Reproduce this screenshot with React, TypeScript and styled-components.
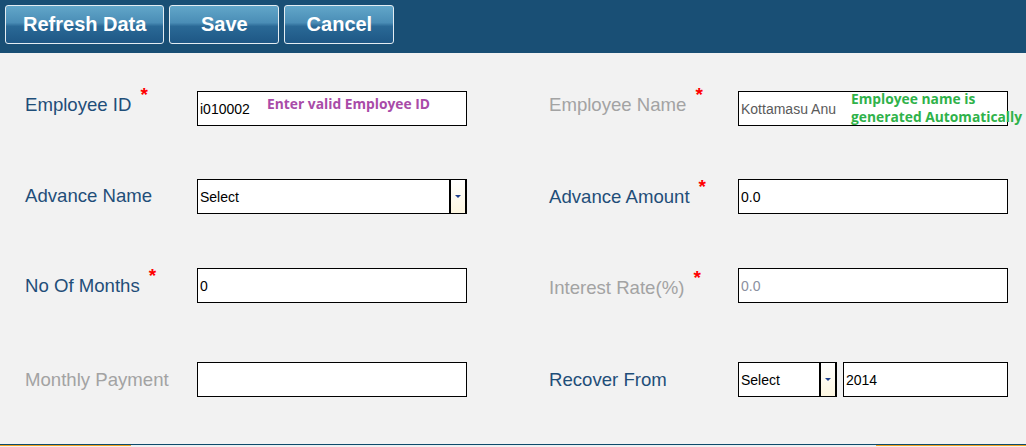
import styled, { createGlobalStyle } from 'styled-components'

const GlobalStyle = createGlobalStyle`
  html, body {
    margin: 0;
    padding: 0;
    background: #f2f2f2;
    font-family: "Liberation Sans", Arial, sans-serif;
  }
`

const Page = styled.div`
  width: 1026px;
  height: 447px;
  display: flex;
  flex-direction: column;
  overflow: hidden;
  background: #f2f2f2;
`

const Toolbar = styled.header`
  height: 53px;
  background: #194f75;
  display: flex;
  align-items: flex-start;
  gap: 5px;
  padding: 5px 0 0 5px;
  box-sizing: border-box;
`

const ToolButton = styled.button`
  height: 39px;
  min-width: 110px;
  padding: 0 17px;
  border: 1px solid #e3ecf2;
  border-radius: 3px;
  background: linear-gradient(180deg, #62a6c9 0%, #4a8db6 45%, #2a6996 55%, #1e5785 100%);
  color: #fff;
  font-family: "Liberation Sans", Arial, sans-serif;
  font-size: 20px;
  font-weight: bold;
  box-sizing: border-box;
  cursor: pointer;
`

const Form = styled.main`
  flex: 1;
  padding: 38px 0 0 25px;
  display: flex;
  flex-direction: column;
`

const Row = styled.div<{ $top: number }>`
  display: grid;
  grid-template-columns: 172px 270px 82px 189px 270px;
  height: 35px;
  margin-top: ${p => p.$top}px;
  align-items: center;
`

const Label = styled.label<{ $muted?: boolean; $dy?: number }>`
  font-size: 18.6px;
  color: ${p => (p.$muted ? '#a3a3a3' : '#1f4e79')};
  white-space: nowrap;
  position: relative;
  top: ${p => p.$dy || 0}px;
`

const Star = styled.span`
  color: #f00;
  font-size: 19px;
  font-weight: bold;
  margin-left: 9px;
  position: relative;
  top: -10px;
`

const Spacer = styled.div``

const Field = styled.div`
  position: relative;
  height: 35px;
  display: flex;
  gap: 6px;
`

const TextBox = styled.div<{ $color?: string }>`
  flex: 1;
  height: 35px;
  box-sizing: border-box;
  border: 1px solid #000;
  background: #fff;
  display: flex;
  align-items: center;
  padding-left: 2px;
  font-size: 14px;
  color: ${p => p.$color || '#000'};
  font-family: "Liberation Sans", Arial, sans-serif;
`

const SelectBox = styled.div<{ $width?: number }>`
  ${p => (p.$width ? `width: ${p.$width}px; flex: 0 0 auto;` : 'flex: 1;')}
  height: 35px;
  box-sizing: border-box;
  border: 1px solid #000;
  background: #fff;
  display: flex;
  align-items: center;
  font-size: 14px;
  color: #000;
`

const SelectText = styled.span`
  flex: 1;
  padding-left: 2px;
`

const Arrow = styled.span`
  width: 17px;
  height: 100%;
  box-sizing: border-box;
  border-left: 2px solid #000;
  border-right: 1px solid #000;
  background: linear-gradient(180deg, #ffffff 0%, #fdf6e0 100%);
  display: flex;
  align-items: center;
  justify-content: center;
  &::after {
    content: '';
    border-left: 3px solid transparent;
    border-right: 3px solid transparent;
    border-top: 3px solid #1f3f8a;
  }
`

const Hint = styled.span<{ $color: string; $left: number; $top: number }>`
  position: absolute;
  left: ${p => p.$left}px;
  top: ${p => p.$top}px;
  color: ${p => p.$color};
  font-family: "Open Sans", sans-serif;
  font-weight: bold;
  font-size: 13.8px;
  line-height: 18px;
  white-space: nowrap;
`

const Footer = styled.footer`
  height: 2px;
  border-top: 1px solid #0e4a6b;
  display: flex;
`

const FooterSeg = styled.span<{ $color: string; $width?: number }>`
  background: ${p => p.$color};
  ${p => (p.$width ? `width: ${p.$width}px;` : 'flex: 1;')}
  height: 1px;
`

export default function App() {
  return (
    <Page>
      <GlobalStyle />
      <Toolbar>
        <ToolButton>Refresh Data</ToolButton>
        <ToolButton>Save</ToolButton>
        <ToolButton>Cancel</ToolButton>
      </Toolbar>

      <Form>
        <Row $top={0}>
          <Label $dy={-4}>Employee ID<Star>*</Star></Label>
          <Field>
            <TextBox>i010002</TextBox>
            <Hint $color="#a94ba8" $left={70} $top={4}>Enter valid Employee ID</Hint>
          </Field>
          <Spacer />
          <Label $muted $dy={-4}>Employee Name<Star>*</Star></Label>
          <Field>
            <TextBox $color="#5a5a5a">Kottamasu Anu</TextBox>
            <Hint $color="#2fb24a" $left={113} $top={-1}>Employee name is<br />generated Automatically</Hint>
          </Field>
        </Row>

        <Row $top={53}>
          <Label $dy={-1}>Advance Name</Label>
          <Field>
            <SelectBox>
              <SelectText>Select</SelectText>
              <Arrow />
            </SelectBox>
          </Field>
          <Spacer />
          <Label>Advance Amount<Star>*</Star></Label>
          <Field>
            <TextBox>0.0</TextBox>
          </Field>
        </Row>

        <Row $top={54}>
          <Label>No Of Months<Star>*</Star></Label>
          <Field>
            <TextBox>0</TextBox>
          </Field>
          <Spacer />
          <Label $muted $dy={2}>Interest Rate(%)<Star>*</Star></Label>
          <Field>
            <TextBox $color="#8b90a0">0.0</TextBox>
          </Field>
        </Row>

        <Row $top={59}>
          <Label $muted>Monthly Payment</Label>
          <Field>
            <TextBox />
          </Field>
          <Spacer />
          <Label>Recover From</Label>
          <Field>
            <SelectBox $width={99}>
              <SelectText>Select</SelectText>
              <Arrow />
            </SelectBox>
            <TextBox>2014</TextBox>
          </Field>
        </Row>
      </Form>

      <Footer>
        <FooterSeg $color="#f0a020" $width={131} />
        <FooterSeg $color="#e8eef2" />
        <FooterSeg $color="#f0a020" $width={150} />
      </Footer>
    </Page>
  )
}
